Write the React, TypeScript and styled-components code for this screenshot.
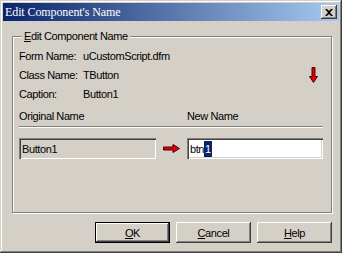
import React from 'react'
import styled, { createGlobalStyle } from 'styled-components'

const GlobalStyle = createGlobalStyle`
  html, body {
    margin: 0;
    padding: 0;
    background: #d4d0c8;
  }
  body {
    font-family: 'Liberation Sans', Arial, sans-serif;
    font-size: 11px;
    letter-spacing: -0.4px;
    color: #000;
  }
`

const Window = styled.div`
  box-sizing: border-box;
  width: 342px;
  height: 253px;
  padding: 3px;
  display: flex;
  flex-direction: column;
  background: #d4d0c8;
  box-shadow: inset -1px -1px #404040, inset 1px 1px #d4d0c8,
    inset -2px -2px #808080, inset 2px 2px #fff;
`

const TitleBar = styled.div`
  height: 18px;
  display: flex;
  align-items: center;
  justify-content: space-between;
  padding: 0 2px 0 2px;
  background: linear-gradient(to right, #0a246a, #a6caf0);
`

const TitleText = styled.span`
  font-family: 'Liberation Serif', 'Times New Roman', serif;
  font-size: 12px;
  letter-spacing: -0.1px;
  color: #fff;
`

const CloseButton = styled.button`
  box-sizing: border-box;
  width: 16px;
  height: 14px;
  padding: 0;
  border: none;
  display: flex;
  align-items: center;
  justify-content: center;
  background: #d4d0c8;
  box-shadow: inset -1px -1px #404040, inset 1px 1px #fff,
    inset -2px -2px #808080, inset 2px 2px #d4d0c8;
`

const Body = styled.div`
  flex: 1;
  display: flex;
  flex-direction: column;
  padding: 9px 7px 7px 9px;
`

const GroupBox = styled.fieldset`
  flex: 1;
  margin: 0;
  padding: 3px 6px 0 6px;
  border: 1px solid #808080;
  box-shadow: inset 1px 1px #fff, 1px 1px #fff;
`

const Legend = styled.legend`
  padding: 0 2px;
  margin-left: 3px;
  line-height: 13px;
  background: #d4d0c8;
`

const Accel = styled.span`
  text-decoration: underline;
`

const InfoBlock = styled.div`
  display: flex;
  align-items: center;
  justify-content: space-between;
  padding-right: 7px;
`

const InfoRows = styled.div`
  display: grid;
  grid-template-columns: 64px auto;
  grid-auto-rows: 19px;
  align-items: center;
`

const NameGrid = styled.div`
  display: grid;
  grid-template-columns: 137px 31px 136px;
  align-items: center;
`

const HeaderLabel = styled.div`
  margin-top: 7px;
  line-height: 13px;
`

const Separator = styled.div`
  grid-column: 1 / -1;
  height: 1px;
  margin: 3px 0 10px 0;
  background: #808080;
  border-bottom: 1px solid #fff;
`

const EditBox = styled.div<{ $readOnly?: boolean }>`
  box-sizing: border-box;
  height: 21px;
  padding: 0 3px;
  display: flex;
  align-items: center;
  background: ${(p) => (p.$readOnly ? '#d4d0c8' : '#fff')};
  box-shadow: inset 1px 1px #808080, inset 2px 2px #404040,
    inset -1px -1px #fff, inset -2px -2px #d4d0c8;
`

const Selected = styled.span`
  display: inline-block;
  line-height: 16px;
  padding: 0 1px;
  background: #0a246a;
  color: #fff;
`

const ArrowCell = styled.div`
  display: flex;
  justify-content: center;
  align-items: center;
`

const ButtonRow = styled.div`
  margin-top: 9px;
  display: flex;
  justify-content: flex-end;
  gap: 6px;
`

const DialogButton = styled.button<{ $default?: boolean }>`
  box-sizing: border-box;
  width: 75px;
  height: 21px;
  padding: 0;
  font-family: 'Liberation Sans', Arial, sans-serif;
  font-size: 11px;
  letter-spacing: -0.4px;
  color: #000;
  background: #d4d0c8;
  border: ${(p) => (p.$default ? '1px solid #000' : 'none')};
  box-shadow: inset -1px -1px #404040, inset 1px 1px #fff,
    inset -2px -2px #808080, inset 2px 2px #d4d0c8;
`

function DownArrow() {
  return (
    <svg width='9' height='16' viewBox='0 0 9 16'>
      <path d='M3 0.5H6V9.5H8.5L4.5 15.5L0.5 9.5H3Z' fill='#e00000' stroke='#500000' strokeWidth='1' />
    </svg>
  )
}

function RightArrow() {
  return (
    <svg width='17' height='9' viewBox='0 0 17 9'>
      <path d='M0.5 3H10V0.5L16.5 4.5L10 8.5V6H0.5Z' fill='#e00000' stroke='#500000' strokeWidth='1' />
    </svg>
  )
}

export default function App() {
  return (
    <>
      <GlobalStyle />
      <Window>
        <TitleBar>
          <TitleText>Edit Component's Name</TitleText>
          <CloseButton aria-label='Close'>
            <svg width='8' height='7' viewBox='0 0 8 7'>
              <path d='M0 0H2L4 2L6 0H8L5 3.5L8 7H6L4 5L2 7H0L3 3.5Z' fill='#000' />
            </svg>
          </CloseButton>
        </TitleBar>
        <Body>
          <GroupBox>
            <Legend>
              <Accel>E</Accel>dit Component Name
            </Legend>
            <InfoBlock>
              <InfoRows>
                <span>Form Name:</span>
                <span>uCustomScript.dfm</span>
                <span>Class Name:</span>
                <span>TButton</span>
                <span>Caption:</span>
                <span>Button1</span>
              </InfoRows>
              <DownArrow />
            </InfoBlock>
            <NameGrid>
              <HeaderLabel>Original Name</HeaderLabel>
              <span />
              <HeaderLabel>New Name</HeaderLabel>
              <Separator />
              <EditBox $readOnly>Button1</EditBox>
              <ArrowCell>
                <RightArrow />
              </ArrowCell>
              <EditBox>
                btn<Selected>1</Selected>
              </EditBox>
            </NameGrid>
          </GroupBox>
          <ButtonRow>
            <DialogButton $default>
              <Accel>O</Accel>K
            </DialogButton>
            <DialogButton>
              <Accel>C</Accel>ancel
            </DialogButton>
            <DialogButton>
              <Accel>H</Accel>elp
            </DialogButton>
          </ButtonRow>
        </Body>
      </Window>
    </>
  )
}
